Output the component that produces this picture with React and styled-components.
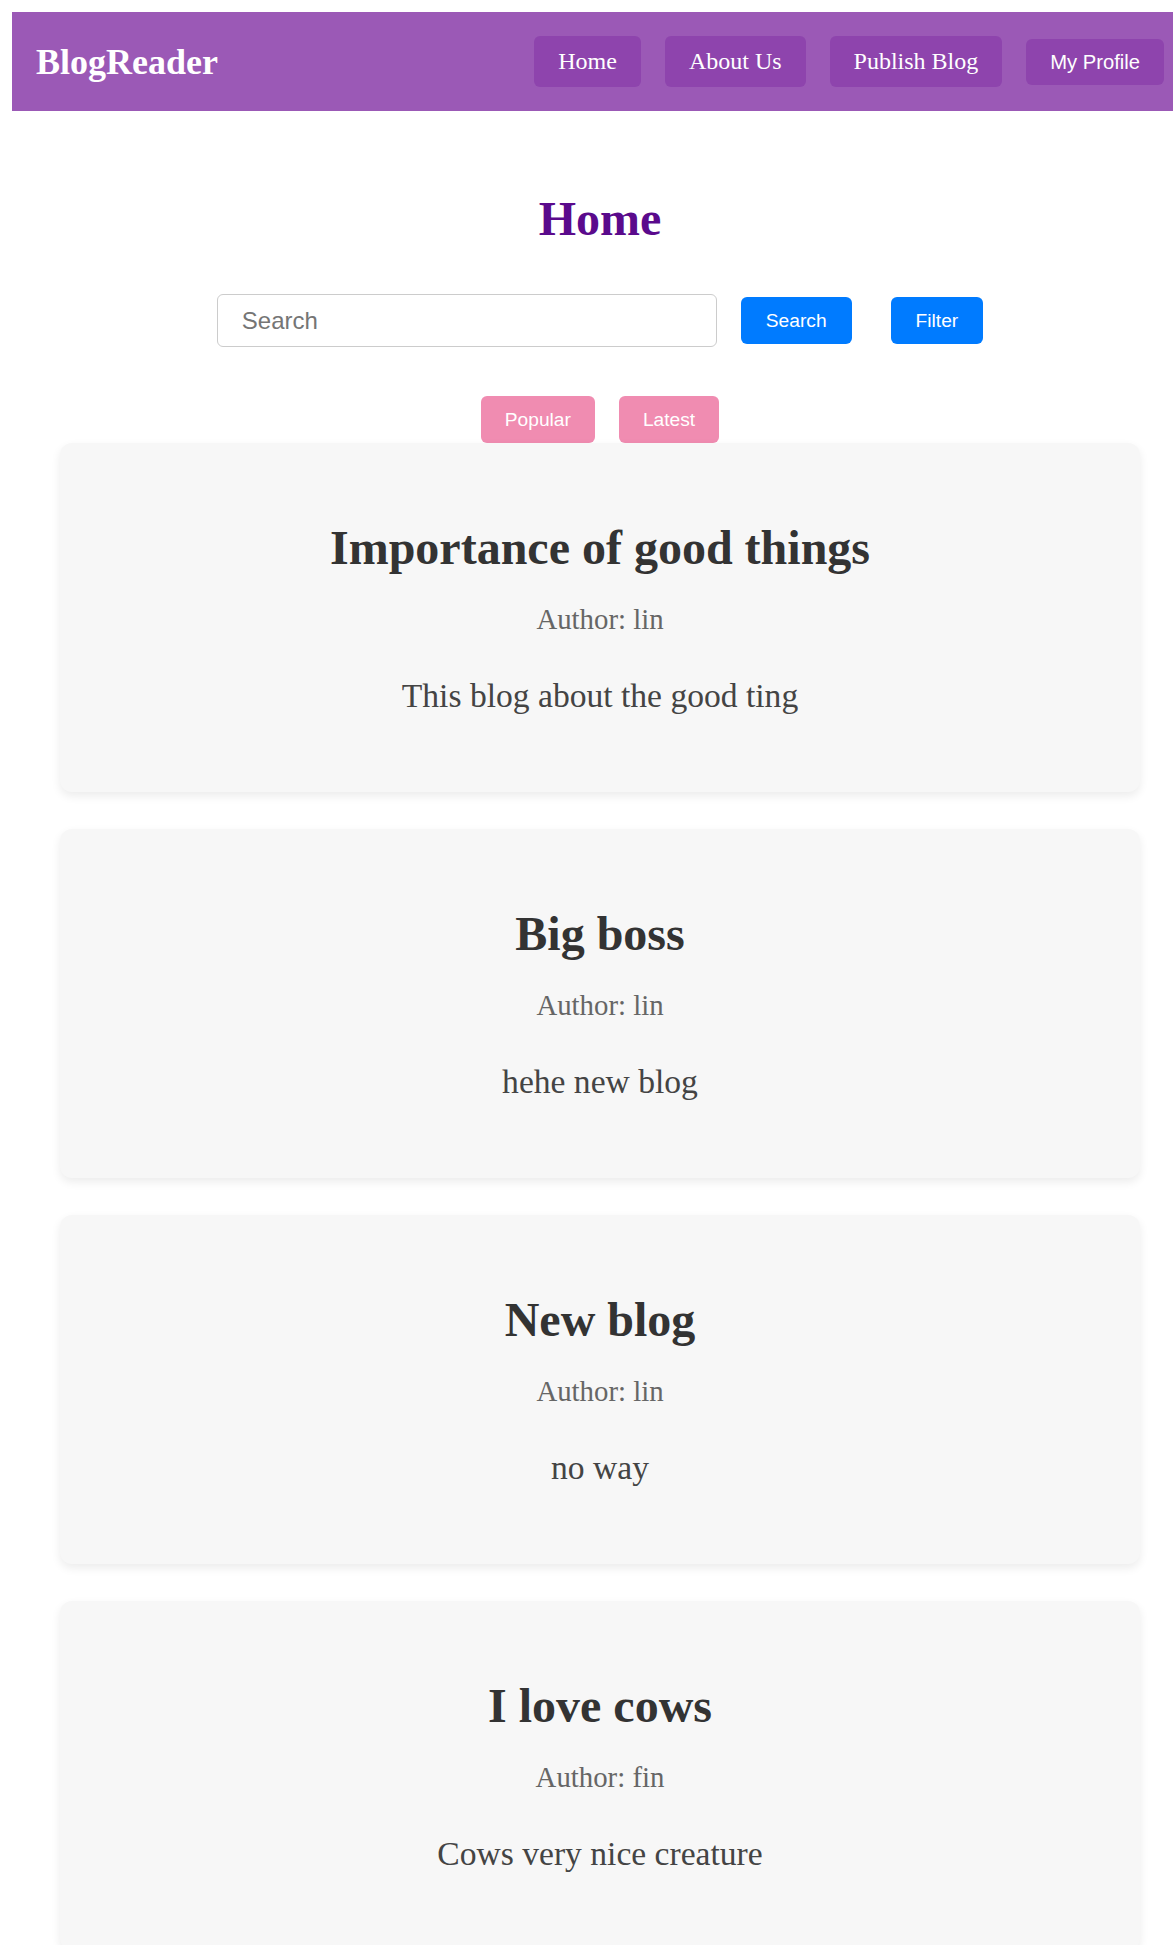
import React from "react";
import styled, { createGlobalStyle } from "styled-components";

const posts = [
    { title: "Importance of good things", author: "lin", body: "This blog about the good ting" },
    { title: "Big boss", author: "lin", body: "hehe new blog" },
    { title: "New blog", author: "lin", body: "no way" },
    { title: "I love cows", author: "fin", body: "Cows very nice creature" },
];

const navLinks = ["Home", "About Us", "Publish Blog"];

function App() {
    return (
        <>
            <GlobalStyle />
            <Page>
                <NavBar>
                    <Logo>BlogReader</Logo>
                    <NavLinks>
                        {navLinks.map((label) => (
                            <NavLink key={label} href="#">
                                {label}
                            </NavLink>
                        ))}
                        <NavButton>My Profile</NavButton>
                    </NavLinks>
                </NavBar>
                <Main>
                    <PageTitle>Home</PageTitle>
                    <SearchRow>
                        <SearchInput placeholder="Search" />
                        <BlueButton>Search</BlueButton>
                        <BlueButton $wide>Filter</BlueButton>
                    </SearchRow>
                    <SortRow>
                        <PinkButton>Popular</PinkButton>
                        <PinkButton>Latest</PinkButton>
                    </SortRow>
                    <CardList>
                        {posts.map((post) => (
                            <Card key={post.title}>
                                <CardTitle>{post.title}</CardTitle>
                                <Author>Author: {post.author}</Author>
                                <Body>{post.body}</Body>
                            </Card>
                        ))}
                    </CardList>
                </Main>
            </Page>
        </>
    );
}

const GlobalStyle = createGlobalStyle`
    html {
        overflow-x: hidden;
    }
    body {
        margin: 0;
        background: #ffffff;
        font-family: "Liberation Serif", "Times New Roman", serif;
    }
`;

const Page = styled.div`
    width: 1188px;
    box-sizing: border-box;
    padding: 12px 0 0 12px;
`;

const NavBar = styled.nav`
    display: flex;
    justify-content: space-between;
    align-items: center;
    background-color: #9b59b6;
    padding: 24px;
`;

const Logo = styled.h1`
    margin: 0;
    font-size: 36px;
    font-weight: 700;
    color: #ffffff;
`;

const NavLinks = styled.div`
    display: flex;
    align-items: center;
    gap: 24px;
`;

const NavLink = styled.a`
    display: block;
    padding: 12px 24px;
    border-radius: 6px;
    background-color: #8e44ad;
    color: #ffffff;
    font-size: 24px;
    text-decoration: none;
`;

const NavButton = styled.button`
    padding: 12px 24px;
    border: none;
    border-radius: 6px;
    background-color: #8e44ad;
    color: #ffffff;
    font-family: "Liberation Sans", Arial, sans-serif;
    font-size: 20.2px;
    line-height: 22px;
`;

const Main = styled.main`
    display: flex;
    flex-direction: column;
`;

const PageTitle = styled.h2`
    margin: 80px 0 48px;
    text-align: center;
    font-size: 48px;
    font-weight: 700;
    color: #5a0a8c;
`;

const SearchRow = styled.div`
    display: flex;
    justify-content: center;
    align-items: center;
`;

const SearchInput = styled.input`
    width: 500px;
    box-sizing: border-box;
    padding: 12px 24px;
    border: 1px solid #cccccc;
    border-radius: 6px;
    font-family: "Liberation Sans", Arial, sans-serif;
    font-size: 24px;
    line-height: 27px;
    &::placeholder {
        color: #757575;
    }
`;

const BlueButton = styled.button`
    margin-left: ${({ $wide }) => ($wide ? "39px" : "24px")};
    padding: 12px 25px;
    border: none;
    border-radius: 6px;
    background-color: #007bff;
    color: #ffffff;
    font-family: "Liberation Sans", Arial, sans-serif;
    font-size: 19.2px;
    line-height: 23px;
`;

const SortRow = styled.div`
    display: flex;
    justify-content: center;
    gap: 24px;
    margin-top: 49px;
`;

const PinkButton = styled.button`
    padding: 12px 24px;
    border: none;
    border-radius: 6px;
    background-color: #f08cb1;
    color: #ffffff;
    font-family: "Liberation Sans", Arial, sans-serif;
    font-size: 19.2px;
    line-height: 23px;
`;

const CardList = styled.div`
    display: flex;
    flex-direction: column;
    gap: 37px;
    padding: 0 48px;
`;

const Card = styled.article`
    padding: 36px;
    border-radius: 12px;
    background-color: #f7f7f7;
    box-shadow: 0 4px 10px rgba(0, 0, 0, 0.08);
    text-align: center;
`;

const CardTitle = styled.h3`
    margin: 41px 0 28px;
    font-size: 48px;
    font-weight: 700;
    color: #333333;
`;

const Author = styled.p`
    margin: 0;
    font-size: 28.8px;
    color: #666666;
`;

const Body = styled.p`
    margin: 41px 0 41px;
    font-size: 33.6px;
    color: #444444;
`;

export default App;
